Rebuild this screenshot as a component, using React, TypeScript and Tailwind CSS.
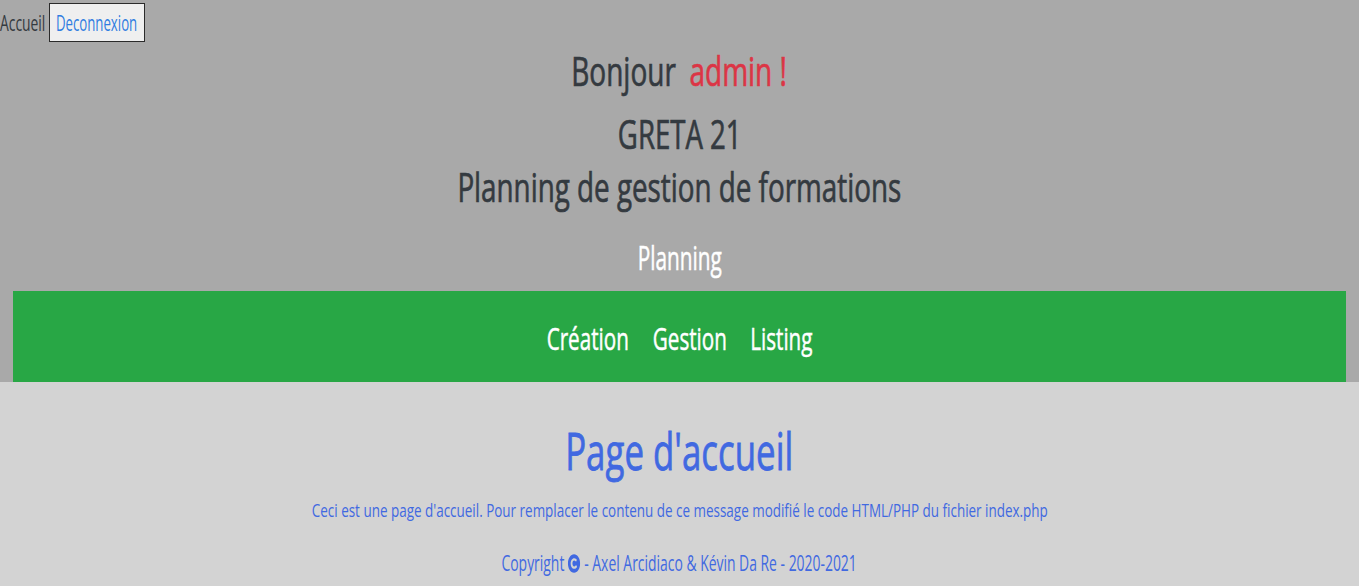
import { FaCopyright } from "react-icons/fa";

export default function App() {
  const f = { fontFamily: '"Open Sans", "Noto Sans", sans-serif' };
  return (
    <div className="min-h-[586px] w-full bg-[#d3d3d3]" style={f}>
      <header className="bg-[#a9a9a9]">
        <div className="flex h-[45px] items-center">
          <div className="w-[45px] overflow-visible whitespace-nowrap text-[21px] leading-[28px] text-[#343a40]">
            <span className="inline-block origin-left scale-x-[0.66]">Accueil</span>
          </div>
          <button className="ml-[4px] flex h-[39px] w-[96px] items-center justify-center overflow-visible border border-[#2b2b2b] bg-[#efefef] p-0">
            <span className="inline-block scale-x-[0.63] whitespace-nowrap text-[21px] leading-[28px] text-[#2f7de1]">Deconnexion</span>
          </button>
        </div>
        <div className="flex h-[51px] items-center justify-center">
          <span className="inline-block scale-x-[0.70] whitespace-nowrap text-[40px] leading-[51px] text-[#343a40] [-webkit-text-stroke:0.7px_currentColor]">
            Bonjour <span className="ml-[9px] text-[#dc3545]">admin !</span>
          </span>
        </div>
        <div className="mt-[11px] flex h-[53px] items-center justify-center">
          <span className="inline-block scale-x-[0.69] whitespace-nowrap text-[40px] leading-[53px] text-[#343a40] [-webkit-text-stroke:0.7px_currentColor]">GRETA 21</span>
        </div>
        <div className="flex h-[53px] items-center justify-center">
          <span className="inline-block scale-x-[0.695] whitespace-nowrap text-[40px] leading-[53px] text-[#343a40] [-webkit-text-stroke:0.7px_currentColor]">Planning de gestion de formations</span>
        </div>
        <div className="flex h-[78px] items-center justify-center pt-[11px]">
          <span className="inline-block scale-x-[0.65] whitespace-nowrap text-[32px] leading-[67px] text-white [-webkit-text-stroke:0.5px_currentColor]">Planning</span>
        </div>
        <nav className="mx-[13px] flex h-[91px] items-center justify-center bg-[#28a745] pt-[3px]">
          <span className="inline-block scale-x-[0.666] whitespace-nowrap text-[31px] leading-[40px] text-white [-webkit-text-stroke:0.5px_currentColor]">
            Création<span className="ml-[36px]">Gestion</span><span className="ml-[35px]">Listing</span>
          </span>
        </nav>
      </header>
      <main className="flex flex-col items-center pt-[37px] text-[#4169e1]">
        <h1 className="flex h-[62px] items-center justify-center">
          <span className="inline-block scale-x-[0.67] whitespace-nowrap text-[52px] leading-[62px] [-webkit-text-stroke:0.8px_currentColor]">Page d'accueil</span>
        </h1>
        <p className="mt-[17px] flex h-[24px] items-center justify-center">
          <span className="inline-block scale-x-[0.708] whitespace-nowrap text-[19px] leading-[24px]">
            Ceci est une page d'accueil. Pour remplacer le contenu de ce message modifié le code HTML/PHP du fichier index.php
          </span>
        </p>
        <p className="mt-[27px] flex h-[28px] items-center justify-center">
          <span className="inline-flex scale-x-[0.6625] items-center whitespace-nowrap text-[21px] leading-[28px]">
            Copyright
            <FaCopyright className="ml-[5px] mr-[6px] h-[19px] w-[19px]" />- Axel Arcidiaco &amp; Kévin Da Re - 2020-2021
          </span>
        </p>
      </main>
    </div>
  );
}
